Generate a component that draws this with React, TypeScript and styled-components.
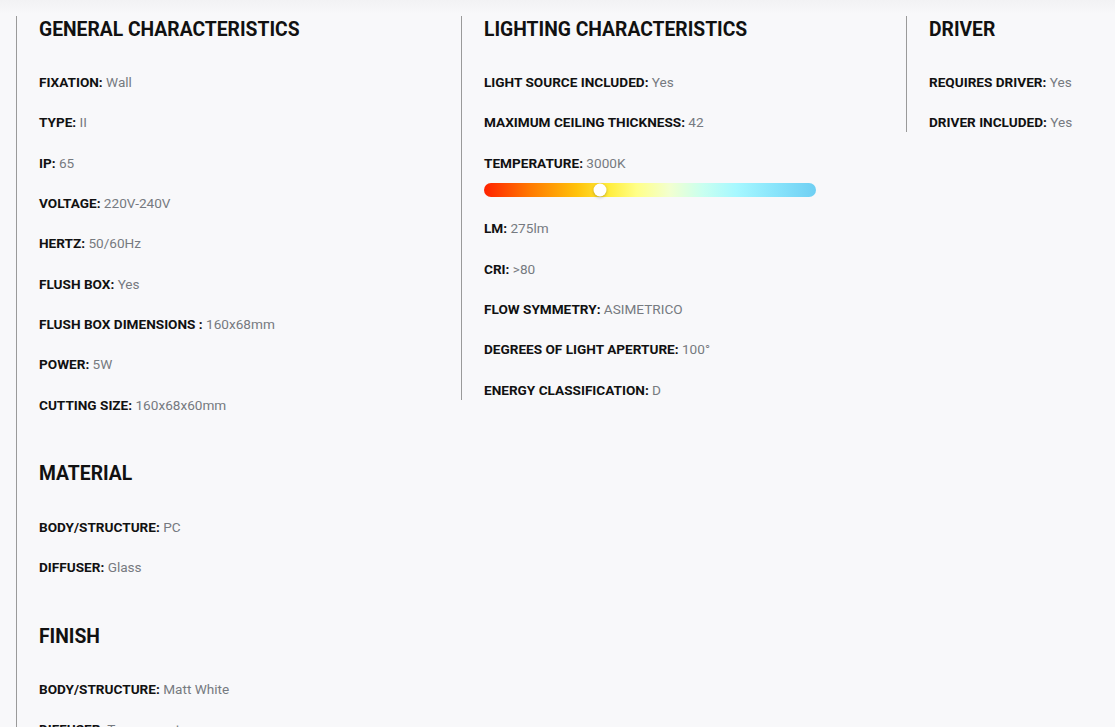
import React from "react";
import styled, { createGlobalStyle } from "styled-components";

const Global = createGlobalStyle`
  html, body { margin: 0; padding: 0; }
  body {
    background: linear-gradient(#f2f2f4 0px, #f8f8fa 14px, #f8f8fa 100%);
    font-family: Roboto, "Liberation Sans", Arial, sans-serif;
    height: 727px;
    overflow: hidden;
  }
`;

const Page = styled.div`
  display: grid;
  grid-template-columns: 445px 445px 445px;
  align-items: start;
  padding: 16px 0 0 16px;
  width: 1115px;
  box-sizing: border-box;
  overflow: hidden;
`;

const Column = styled.div<{ $full?: boolean }>`
  border-left: 1px solid #9a9a9a;
  padding-left: 22px;
  min-height: ${(p) => (p.$full ? "760px" : "0")};
`;

const Section = styled.section`
  display: flex;
  flex-direction: column;
  & + & {
    margin-top: 45.8px;
  }
`;

const Heading = styled.h2`
  margin: 0 0 28.2px;
  font-size: 19.3px;
  line-height: 28px;
  font-weight: 700;
  color: #111;
  text-transform: uppercase;
`;

const Rows = styled.div`
  display: flex;
  flex-direction: column;
  gap: 20.3px;
`;

const Row = styled.div`
  font-size: 13.6px;
  line-height: 20px;
  color: #767a80;
  white-space: nowrap;
`;

const Label = styled.b`
  font-weight: 700;
  color: #111;
`;

const Slider = styled.div`
  position: relative;
  width: 332px;
  height: 14px;
  border-radius: 7px;
  margin: -10px 0 1px;
  background: linear-gradient(
    to right,
    #ff2200 0%,
    #ff7a00 14%,
    #ffc20a 28%,
    #ffee40 38%,
    #ffff88 46%,
    #f2ffd0 56%,
    #c8fff0 66%,
    #a6f8ff 76%,
    #88e4fb 88%,
    #6fcff3 100%
  );
`;

const Knob = styled.span`
  position: absolute;
  top: 50%;
  width: 13px;
  height: 13px;
  border-radius: 50%;
  background: #fff;
  box-shadow: 0 1px 3px rgba(0, 0, 0, 0.25);
  transform: translate(-50%, -50%);
`;

type Item = [string, string];

const Spec = ({ label, value }: { label: string; value: string }) => (
  <Row>
    <Label>{label}</Label> {value}
  </Row>
);

const general: Item[] = [
  ["FIXATION:", "Wall"],
  ["TYPE:", "II"],
  ["IP:", "65"],
  ["VOLTAGE:", "220V-240V"],
  ["HERTZ:", "50/60Hz"],
  ["FLUSH BOX:", "Yes"],
  ["FLUSH BOX DIMENSIONS :", "160x68mm"],
  ["POWER:", "5W"],
  ["CUTTING SIZE:", "160x68x60mm"],
];

const material: Item[] = [
  ["BODY/STRUCTURE:", "PC"],
  ["DIFFUSER:", "Glass"],
];

const finish: Item[] = [
  ["BODY/STRUCTURE:", "Matt White"],
  ["DIFFUSER:", "Transparent"],
];

const lightingTop: Item[] = [
  ["LIGHT SOURCE INCLUDED:", "Yes"],
  ["MAXIMUM CEILING THICKNESS:", "42"],
  ["TEMPERATURE:", "3000K"],
];

const lightingBottom: Item[] = [
  ["LM:", "275lm"],
  ["CRI:", ">80"],
  ["FLOW SYMMETRY:", "ASIMETRICO"],
  ["DEGREES OF LIGHT APERTURE:", "100°"],
  ["ENERGY CLASSIFICATION:", "D"],
];

const driver: Item[] = [
  ["REQUIRES DRIVER:", "Yes"],
  ["DRIVER INCLUDED:", "Yes"],
];

const list = (items: Item[]) =>
  items.map(([l, v], i) => <Spec key={l + i} label={l} value={v} />);

export default function App() {
  return (
    <>
      <Global />
      <Page>
        <Column $full>
          <Section>
            <Heading>General characteristics</Heading>
            <Rows>{list(general)}</Rows>
          </Section>
          <Section>
            <Heading>Material</Heading>
            <Rows>{list(material)}</Rows>
          </Section>
          <Section>
            <Heading>Finish</Heading>
            <Rows>{list(finish)}</Rows>
          </Section>
        </Column>
        <Column>
          <Section>
            <Heading>Lighting characteristics</Heading>
            <Rows>
              {list(lightingTop)}
              <Slider>
                <Knob style={{ left: `${(116 / 332) * 100}%` }} />
              </Slider>
              {list(lightingBottom)}
            </Rows>
          </Section>
        </Column>
        <Column>
          <Section>
            <Heading>Driver</Heading>
            <Rows>{list(driver)}</Rows>
          </Section>
        </Column>
      </Page>
    </>
  );
}
